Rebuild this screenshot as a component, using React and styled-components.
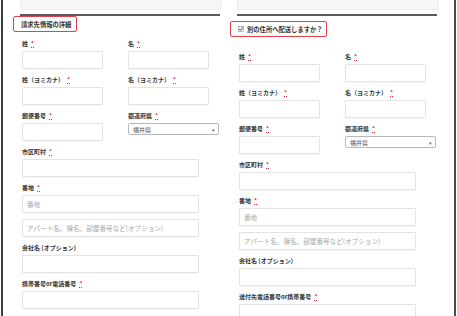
import styled, { createGlobalStyle } from 'styled-components';

const GlobalStyle = createGlobalStyle`
	html, body {
		margin: 0;
		padding: 0;
		background: #ffffff;
	}
	body {
		font-family: 'Noto Sans CJK JP', 'Noto Sans', sans-serif;
		color: #333333;
	}
`;

const billingFields = [
	{ row: [{ label: '姓', required: true }, { label: '名', required: true }] },
	{ row: [{ label: '姓（ヨミカナ）', required: true }, { label: '名（ヨミカナ）', required: true }] },
	{ row: [{ label: '郵便番号', required: true }, { label: '都道府県', required: true, select: '福井県' }] },
	{ label: '市区町村', required: true },
	{ label: '番地', required: true, placeholder: '番地', extra: 'アパート名、棟名、部屋番号など(オプション)' },
	{ label: '会社名 (オプション)' },
	{ label: '携帯番号or電話番号', required: true },
];

const shippingFields = [
	{ row: [{ label: '姓', required: true }, { label: '名', required: true }] },
	{ row: [{ label: '姓（ヨミカナ）', required: true }, { label: '名（ヨミカナ）', required: true }] },
	{ row: [{ label: '郵便番号', required: true }, { label: '都道府県', required: true, select: '福井県' }] },
	{ label: '市区町村', required: true },
	{ label: '番地', required: true, placeholder: '番地', extra: 'アパート名、棟名、部屋番号など(オプション)' },
	{ label: '会社名 (オプション)' },
	{ label: '送付先電話番号or携帯番号', required: true },
];

function Field({ label, required, placeholder, extra, select, half }) {
	return (
		<StyledField>
			<StyledLabel>
				{label}
				{required && <StyledRequired>*</StyledRequired>}
			</StyledLabel>
			{select ? (
				<StyledSelect>
					<span>{select}</span>
					<StyledArrow>▾</StyledArrow>
				</StyledSelect>
			) : (
				<StyledInput $half={half} placeholder={placeholder} readOnly />
			)}
			{extra && <StyledInput placeholder={extra} readOnly />}
		</StyledField>
	);
}

function FieldList({ fields }) {
	return fields.map((field, i) =>
		field.row ? (
			<StyledRow key={i}>
				{field.row.map((f) => (
					<Field key={f.label} {...f} half />
				))}
			</StyledRow>
		) : (
			<Field key={i} {...field} />
		)
	);
}

function CheckIcon() {
	return (
		<svg width='6' height='6' viewBox='0 0 6 6'>
			<rect x='0.5' y='0.5' width='5' height='5' fill='#f4f4f4' stroke='#9a9a9a' strokeWidth='0.7' />
			<path d='M1.3 3.1 L2.5 4.3 L4.8 1.4' fill='none' stroke='#333' strokeWidth='0.9' />
		</svg>
	);
}

export default function App() {
	return (
		<>
			<GlobalStyle />
			<StyledFrame>
				<StyledColumn>
					<StyledTopBox />
					<StyledRule />
					<StyledHeading $top={0} $width={64}>
						請求先情報の詳細
					</StyledHeading>
					<StyledFields $top={7}>
						<FieldList fields={billingFields} />
					</StyledFields>
				</StyledColumn>
				<StyledColumn>
					<StyledTopBox />
					<StyledRule />
					<StyledHeading $top={5} $width={97}>
						<CheckIcon />
						別の住所へ配送しますか？
					</StyledHeading>
					<StyledFields $top={15}>
						<FieldList fields={shippingFields} />
					</StyledFields>
				</StyledColumn>
			</StyledFrame>
		</>
	);
}

const StyledFrame = styled.div`
	display: flex;
	align-items: flex-start;
	gap: 17px;
	box-sizing: border-box;
	width: 455px;
	height: 316px;
	margin-left: 1px;
	padding: 0 17px;
	overflow: hidden;
	border-left: 2px solid #3c3c3c;
	border-right: 2px solid #4a4a4a;
`;

const StyledColumn = styled.div`
	display: flex;
	flex-direction: column;
	width: 200px;
	flex-shrink: 0;
	& > * {
		flex-shrink: 0;
	}
`;

const StyledTopBox = styled.div`
	height: 10px;
	margin-right: -2px;
	background: #f6f6f6;
	border: 1px solid #f0f0f0;
	border-top: none;
	box-sizing: border-box;
`;

const StyledRule = styled.div`
	height: 2px;
	margin-top: 4px;
	background: #5a5a5a;
`;

const StyledHeading = styled.div`
	display: flex;
	align-items: center;
	gap: 3px;
	box-sizing: border-box;
	width: ${({ $width }) => $width}px;
	height: 16px;
	margin: ${({ $top }) => $top}px 0 0 -7px;
	padding-left: 7px;
	border: 1px solid #e2434b;
	border-radius: 2px;
	font-size: 6.3px;
	font-weight: 700;
	color: #333;
	white-space: nowrap;
`;

const StyledFields = styled.div`
	display: flex;
	flex-direction: column;
	margin-top: ${({ $top }) => $top}px;
	padding-left: 2px;
`;

const StyledRow = styled.div`
	display: grid;
	grid-template-columns: 106px 1fr;
`;

const StyledField = styled.div`
	display: flex;
	flex-direction: column;
	align-items: flex-start;
	gap: 6px;
	margin-bottom: 6px;
	& > label {
		margin-bottom: -4px;
	}
`;

const StyledLabel = styled.label`
	display: block;
	height: 10px;
	line-height: 10px;
	font-size: 6px;
	font-weight: 700;
	color: #333;
	white-space: nowrap;
`;

const StyledRequired = styled.abbr`
	margin-left: 3px;
	color: #e2303a;
	text-decoration: underline dotted;
	text-underline-offset: 1px;
`;

const StyledInput = styled.input`
	box-sizing: border-box;
	width: ${({ $half }) => ($half ? '81px' : '177px')};
	height: 18px;
	margin: 0;
	padding: 0 4px;
	border: 1px solid #e4e4e4;
	border-radius: 1px;
	box-shadow: 0 1px 1px rgba(0, 0, 0, 0.04);
	background: #fff;
	font-family: inherit;
	font-size: 6.6px;
	outline: none;
	&::placeholder {
		color: #a8a8a8;
	}
`;

const StyledSelect = styled.div`
	display: flex;
	align-items: center;
	justify-content: space-between;
	box-sizing: border-box;
	width: 91px;
	height: 12px;
	padding: 0 3px 0 4px;
	border: 1px solid #b8b8b8;
	border-radius: 2px;
	background: #fff;
	font-size: 6px;
	color: #555;
`;

const StyledArrow = styled.span`
	font-size: 5px;
	color: #666;
`;
